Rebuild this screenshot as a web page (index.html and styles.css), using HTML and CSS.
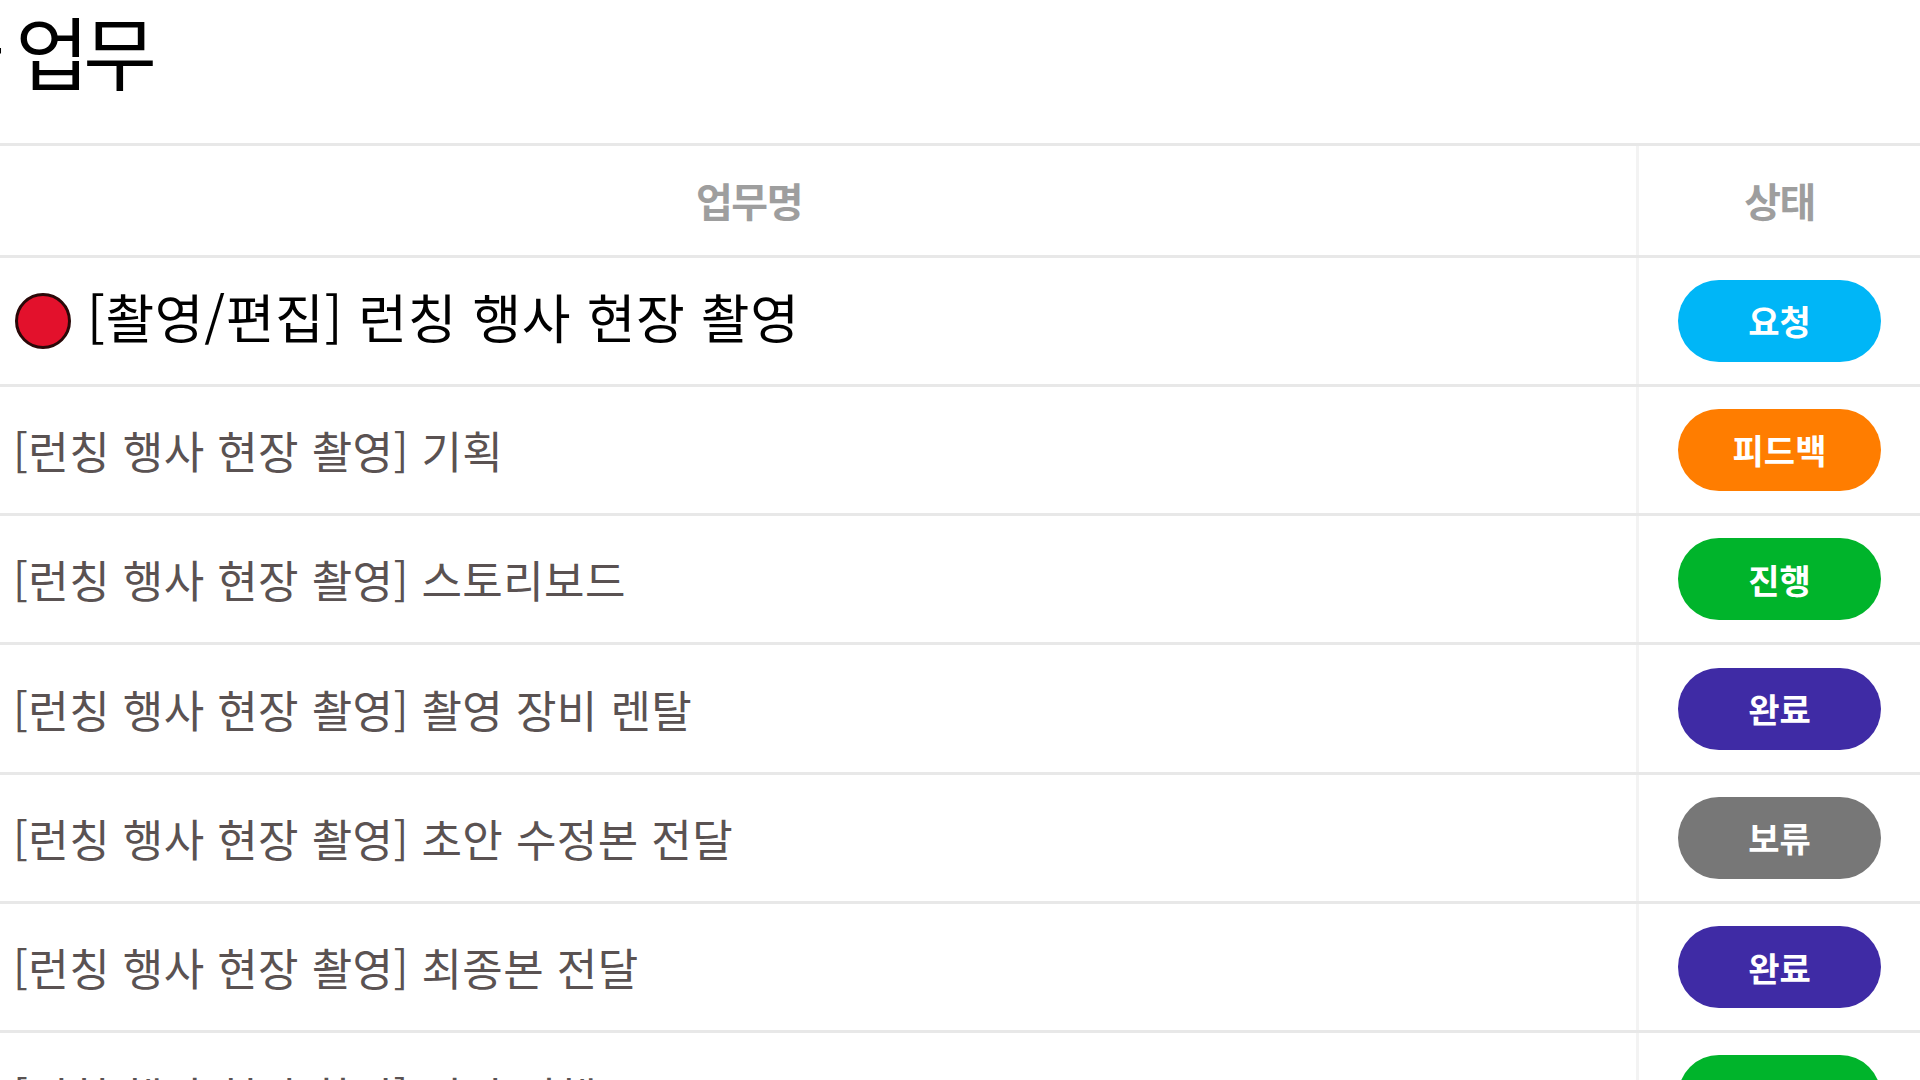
FILE: index.html
```html
<!DOCTYPE html>
<html lang="ko">
<head>
<meta charset="utf-8">
<title>오늘 업무</title>
<link rel="stylesheet" href="styles.css">
</head>
<body>
<div class="screen">
  <h1 class="title">오늘 업무</h1>
  <div class="table">
    <div class="row head">
      <div class="cell name">업무명</div>
      <div class="cell status">상태</div>
    </div>
    <div class="row main">
      <div class="cell name"><span class="dot"></span><span class="text">[촬영/편집] 런칭 행사 현장 촬영</span></div>
      <div class="cell status"><span class="pill req">요청</span></div>
    </div>
    <div class="row">
      <div class="cell name"><span class="text">[런칭 행사 현장 촬영] 기획</span></div>
      <div class="cell status"><span class="pill fb">피드백</span></div>
    </div>
    <div class="row">
      <div class="cell name"><span class="text">[런칭 행사 현장 촬영] 스토리보드</span></div>
      <div class="cell status"><span class="pill prog">진행</span></div>
    </div>
    <div class="row">
      <div class="cell name"><span class="text">[런칭 행사 현장 촬영] 촬영 장비 렌탈</span></div>
      <div class="cell status"><span class="pill done">완료</span></div>
    </div>
    <div class="row">
      <div class="cell name"><span class="text">[런칭 행사 현장 촬영] 초안 수정본 전달</span></div>
      <div class="cell status"><span class="pill hold">보류</span></div>
    </div>
    <div class="row">
      <div class="cell name"><span class="text">[런칭 행사 현장 촬영] 최종본 전달</span></div>
      <div class="cell status"><span class="pill done">완료</span></div>
    </div>
    <div class="row">
      <div class="cell name"><span class="text">[런칭 행사 현장 촬영] 편집 진행</span></div>
      <div class="cell status"><span class="pill prog">진행</span></div>
    </div>
  </div>
</div>
</body>
</html>
```
FILE: styles.css
```css
html, body {
  margin: 0;
  padding: 0;
  background: #ffffff;
  overflow: hidden;
  width: 1920px;
  height: 1080px;
}
body {
  font-family: "Noto Sans CJK KR", "Noto Sans", sans-serif;
}
.screen {
  margin-left: -138px;
  width: 2058px;
}
.title {
  margin: 0;
  box-sizing: border-box;
  height: 146px;
  padding-top: 9px;
  font-size: 80px;
  line-height: 1;
  font-weight: 400;
  color: #000000;
  letter-spacing: -6px;
  word-spacing: 0;
  text-indent: 2px;
  border-bottom: 3px solid #e8e8e8;
  white-space: nowrap;
}
.row {
  display: grid;
  grid-template-columns: 1fr 284px;
  border-bottom: 3px solid #e8e8e8;
}
.cell {
  box-sizing: border-box;
  height: 126.3px;
  display: flex;
  align-items: center;
}
.head .cell {
  height: 108.5px;
  justify-content: center;
  font-size: 40px;
  font-weight: 700;
  color: #9e9e9e;
  letter-spacing: -1.5px;
}
.cell.status {
  border-left: 3px solid #f3f3f3;
  justify-content: center;
}
.cell.name {
  padding-left: 151px;
}
.head .cell.name {
  padding-left: 0;
}
.main .cell.name {
  padding-left: 153px;
}
.text {
  font-size: 44px;
  color: #5a5252;
  letter-spacing: 0.4px;
  white-space: nowrap;
}
.main .text {
  font-size: 53px;
  color: #000000;
  letter-spacing: 0.6px;
  margin-top: -10px;
}
.dot {
  box-sizing: border-box;
  width: 56px;
  height: 56px;
  border-radius: 50%;
  background: #e3112c;
  border: 3px solid #2a0808;
  margin-right: 16px;
  flex: none;
}
.pill {
  width: 203px;
  height: 82px;
  border-radius: 41px;
  display: flex;
  align-items: center;
  justify-content: center;
  color: #ffffff;
  font-size: 34px;
  font-weight: 700;
  letter-spacing: 0;
}
.pill.req { background: #00b6f7; }
.pill.fb { background: #ff7d00; }
.pill.prog { background: #00b42b; }
.pill.done { background: #3f2ba5; }
.pill.hold { background: #777777; }
```
